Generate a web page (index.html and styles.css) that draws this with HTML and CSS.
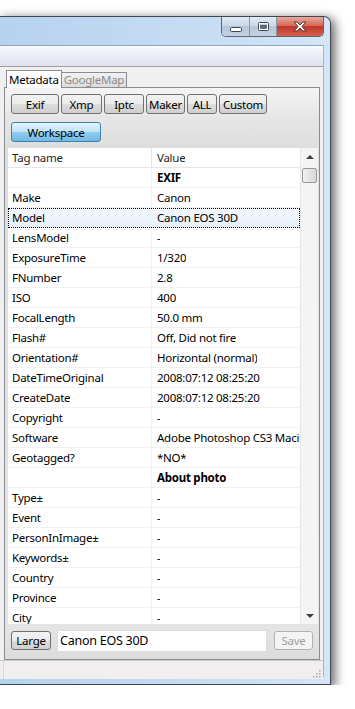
FILE: index.html
```html
<!DOCTYPE html>
<html lang="en">
<head>
  <meta charset="UTF-8" />
  <meta name="viewport" content="width=device-width, initial-scale=1.0"/>
  <title>Metadata</title>
  <link rel="stylesheet" href="styles.css">
</head>
<body>
  <div class="window">
    <div class="titlebar">
      <div class="caption">
        <div class="cbtn cmin">
          <svg width="12" height="5" viewBox="0 0 12 5"><rect x="0.5" y="0.5" width="11" height="4" rx="1" fill="#fff" stroke="#3b4656"/></svg>
        </div>
        <div class="cbtn cmax">
          <svg width="11" height="9" viewBox="0 0 11 9"><rect x="0.5" y="0.5" width="10" height="8" rx="1" fill="#fff" stroke="#3b4656"/><rect x="2.5" y="3" width="6" height="3.5" fill="#5c6b7e" stroke="#3b4656" stroke-width="0.6"/></svg>
        </div>
        <div class="cbtn cclose">
          <svg width="14" height="11" viewBox="0 0 14 11"><path d="M1 1h3.2L7 4l2.8-3H13L9 5.5 13 10H9.8L7 7 4.2 10H1l4-4.5z" fill="#fff" stroke="#4a2020" stroke-width="0.9" stroke-linejoin="round"/></svg>
        </div>
      </div>
    </div>

    <div class="client">
      <div class="toolbar"></div>

      <div class="content">
        <div class="tabs">
          <div class="tab tab-active">Metadata</div>
          <div class="tab">GoogleMap</div>
        </div>

        <div class="panel">
          <div class="btnrow">
            <button class="btn w-exif">Exif</button>
            <button class="btn w-xmp">Xmp</button>
            <button class="btn w-iptc">Iptc</button>
            <button class="btn w-maker">Maker</button>
            <button class="btn w-all">ALL</button>
            <button class="btn w-custom">Custom</button>
          </div>
          <div class="btnrow second">
            <button class="btn btn-blue w-work">Workspace</button>
          </div>

          <div class="grid">
            <div class="gridbody">
              <div class="row head"><div class="c1">Tag name</div><div class="c2">Value</div></div>
              <div class="row"><div class="c1"></div><div class="c2 bold">EXIF</div></div>
              <div class="row"><div class="c1">Make</div><div class="c2">Canon</div></div>
              <div class="row selected"><div class="c1">Model</div><div class="c2">Canon EOS 30D</div></div>
              <div class="row"><div class="c1">LensModel</div><div class="c2">-</div></div>
              <div class="row"><div class="c1">ExposureTime</div><div class="c2">1/320</div></div>
              <div class="row"><div class="c1">FNumber</div><div class="c2">2.8</div></div>
              <div class="row"><div class="c1">ISO</div><div class="c2">400</div></div>
              <div class="row"><div class="c1">FocalLength</div><div class="c2">50.0 mm</div></div>
              <div class="row"><div class="c1">Flash#</div><div class="c2">Off, Did not fire</div></div>
              <div class="row"><div class="c1">Orientation#</div><div class="c2">Horizontal (normal)</div></div>
              <div class="row"><div class="c1">DateTimeOriginal</div><div class="c2">2008:07:12 08:25:20</div></div>
              <div class="row"><div class="c1">CreateDate</div><div class="c2">2008:07:12 08:25:20</div></div>
              <div class="row"><div class="c1">Copyright</div><div class="c2">-</div></div>
              <div class="row"><div class="c1">Software</div><div class="c2">Adobe Photoshop CS3 Macintosh</div></div>
              <div class="row"><div class="c1">Geotagged?</div><div class="c2">*NO*</div></div>
              <div class="row"><div class="c1"></div><div class="c2 bold">About photo</div></div>
              <div class="row"><div class="c1">Type±</div><div class="c2">-</div></div>
              <div class="row"><div class="c1">Event</div><div class="c2">-</div></div>
              <div class="row"><div class="c1">PersonInImage±</div><div class="c2">-</div></div>
              <div class="row"><div class="c1">Keywords±</div><div class="c2">-</div></div>
              <div class="row"><div class="c1">Country</div><div class="c2">-</div></div>
              <div class="row"><div class="c1">Province</div><div class="c2">-</div></div>
              <div class="row"><div class="c1">City</div><div class="c2">-</div></div>
            </div>
            <div class="vscroll">
              <div class="arrow"><span class="tri-up"></span></div>
              <div class="track"><div class="thumb"></div></div>
              <div class="arrow"><span class="tri-down"></span></div>
            </div>
          </div>

          <div class="editrow">
            <button class="btn w-large">Large</button>
            <div class="textbox">Canon EOS 30D</div>
            <button class="btn btn-disabled w-save">Save</button>
          </div>
        </div>
      </div>

      <div class="statusbar">
        <div class="statuscell"></div>
        <svg class="grip" width="9" height="9" viewBox="0 0 9 9">
          <rect x="7" y="1" width="1.5" height="1.5" fill="#a5a5a5"/>
          <rect x="4" y="4" width="1.5" height="1.5" fill="#a5a5a5"/>
          <rect x="7" y="4" width="1.5" height="1.5" fill="#a5a5a5"/>
          <rect x="1" y="7" width="1.5" height="1.5" fill="#a5a5a5"/>
          <rect x="4" y="7" width="1.5" height="1.5" fill="#a5a5a5"/>
          <rect x="7" y="7" width="1.5" height="1.5" fill="#a5a5a5"/>
        </svg>
      </div>
    </div>
  </div>
</body>
</html>
```

FILE: styles.css
```css
body {
  margin: 0;
  background: #fff;
  font-family: 'Noto Sans', 'Open Sans', sans-serif;
  font-size: 11.5px;
  letter-spacing: -0.25px;
  color: #000;
}

.window {
  margin-top: 16px;
  width: 331px;
  height: 669px;
  box-sizing: border-box;
  border: 1px solid #3f4752;
  border-left: none;
  border-top-right-radius: 7px;
  background: linear-gradient(90deg, #b6d2ef, #c9def4 70%, #d4e6f7);
  box-shadow: 3px 3px 11px 1px rgba(0,0,0,0.6);
  display: flex;
  flex-direction: column;
}

/* title bar */
.titlebar {
  height: 28px;
  display: flex;
  justify-content: flex-end;
  align-items: flex-start;
  padding-right: 6px;
}
.caption {
  display: flex;
  height: 19px;
  border: 1px solid #5b6777;
  border-top: none;
  border-radius: 0 0 5px 5px;
  overflow: hidden;
}
.cbtn {
  display: flex;
  align-items: center;
  justify-content: center;
}
.cmin, .cmax {
  background: linear-gradient(#e1eaf4, #ccd9e7 45%, #b6c6d9 50%, #c3d2e2);
  border-right: 1px solid #8797aa;
}
.cmin { width: 28px; padding-top: 5px; box-sizing: border-box; }
.cmax { width: 26px; }
.cclose {
  width: 46px;
  background: linear-gradient(#e9a99c, #d46a5a 45%, #c0392b 50%, #d4604c);
}

/* client area */
.client {
  width: 324px;
  height: 632px;
  box-sizing: border-box;
  border-top: 1px solid #8fa6bf;
  border-right: 1px solid #a3b6ca;
  background: #f0f0f0;
  display: flex;
  flex-direction: column;
}
.toolbar {
  height: 20px;
  flex-shrink: 0;
  background: linear-gradient(#fafbfd, #eef0f7 35%, #dfe2ee);
  border-bottom: 1px solid #a0a0a0;
}
.content {
  flex: 1;
  display: flex;
  flex-direction: column;
  padding: 3px 3px 0 4px;
  background: #f0f0f0;
}

/* tabs */
.tabs {
  display: flex;
  height: 17px;
  flex-shrink: 0;
  padding-left: 2px;
  position: relative;
  z-index: 1;
}
.tab {
  height: 15px;
  margin-top: 2px;
  padding: 0 2px;
  box-sizing: border-box;
  border: 1px solid #898c95;
  border-bottom: none;
  border-left: none;
  background: linear-gradient(#f2f2f2, #dcdcdc);
  color: #8c8c8c;
  line-height: 13px;
}
.tab-active {
  height: 18px;
  margin-top: 0;
  border-left: 1px solid #898c95;
  background: #fff;
  color: #000;
  line-height: 17px;
}

.panel {
  flex: 1;
  display: flex;
  flex-direction: column;
  border: 1px solid #898c95;
  padding: 6px 1px 7px 3px;
  background: linear-gradient(#f4f4f4, #e6e6e6 30px, #dedede 60px, #e4e4e4 95%, #dcdcdc);
}

.btnrow {
  display: flex;
  gap: 2px;
  margin-left: 3px;
}
.btnrow.second {
  margin-top: 8px;
}

.btn {
  height: 20px;
  padding: 0;
  box-sizing: border-box;
  border: 1px solid #707070;
  border-radius: 3px;
  background: linear-gradient(#f2f2f2, #ebebeb 50%, #dddddd 51%, #cfcfcf);
  font-family: inherit;
  font-size: 11.5px;
  letter-spacing: -0.25px;
  color: #000;
  line-height: 17px;
}
.btn-blue {
  border-color: #3c7fb1;
  background: linear-gradient(#e3f3fc, #bfe3f7 50%, #93cdef 51%, #72b9e3);
}
.btn-disabled {
  border-color: #adb2b5;
  background: #f4f4f4;
  color: #a0a0a0;
}
.w-exif { width: 48px; }
.w-xmp { width: 41px; }
.w-iptc { width: 40px; }
.w-maker { width: 39px; }
.w-all { width: 30px; }
.w-custom { width: 48px; }
.w-work { width: 90px; }
.w-large { width: 40px; height: 19px; margin-top: 1px; }
.w-save { width: 39px; height: 19px; margin-top: 1px; }

/* data grid */
.grid {
  margin-top: 6px;
  height: 476px;
  display: flex;
  background: #fff;
  overflow: hidden;
}
.gridbody {
  width: 294px;
  overflow: hidden;
}
.row {
  display: flex;
  height: 20px;
  box-sizing: border-box;
  border-bottom: 1px solid #f0f0f0;
  line-height: 19px;
  white-space: nowrap;
}
.row .c1 {
  width: 144px;
  flex-shrink: 0;
  box-sizing: border-box;
  padding-left: 4px;
  border-right: 1px solid #f0f0f0;
}
.row .c2 {
  padding-left: 5px;
  overflow: hidden;
}
.row.head {
  border-bottom-color: #e5e5e5;
  color: #1e1e1e;
}
.row.head .c1 {
  border-right-color: #e3e3e3;
}
.row.selected {
  background: linear-gradient(#f4f8fd, #e6effa);
  outline: 1px dotted #000;
  outline-offset: -1px;
}
.bold {
  font-weight: bold;
}

.vscroll {
  width: 17px;
  display: flex;
  flex-direction: column;
  background: #f4f4f4;
  border-left: 1px solid #e8e8e8;
}
.arrow {
  height: 17px;
  display: flex;
  align-items: center;
  justify-content: center;
}
.tri-up {
  border-left: 4px solid transparent;
  border-right: 4px solid transparent;
  border-bottom: 4px solid #404040;
}
.tri-down {
  border-left: 4px solid transparent;
  border-right: 4px solid transparent;
  border-top: 4px solid #404040;
}
.track {
  flex: 1;
  padding: 3px 1px 0 1px;
}
.thumb {
  height: 13px;
  border: 1px solid #979797;
  border-radius: 2px;
  background: linear-gradient(90deg, #f2f2f2, #e4e4e4 50%, #d8d8d8);
}

/* edit row */
.editrow {
  display: flex;
  align-items: flex-start;
  margin: 6px 5px 0 3px;
  height: 22px;
}
.textbox {
  flex: 1;
  height: 22px;
  margin: 0 7px 0 6px;
  box-sizing: border-box;
  border: 1px solid #d9dce0;
  background: #fff;
  padding-left: 2px;
  font-size: 12.5px;
  line-height: 19px;
}

/* status bar */
.statusbar {
  height: 18px;
  flex-shrink: 0;
  border-top: 1px solid #c8c8c8;
  background: #f0eeee;
  display: flex;
  align-items: flex-end;
  justify-content: space-between;
}
.statuscell {
  width: 3px;
  height: 100%;
  border-right: 1px solid #d8d6d6;
}
.grip {
  margin: 0 2px 1px 0;
}
```
